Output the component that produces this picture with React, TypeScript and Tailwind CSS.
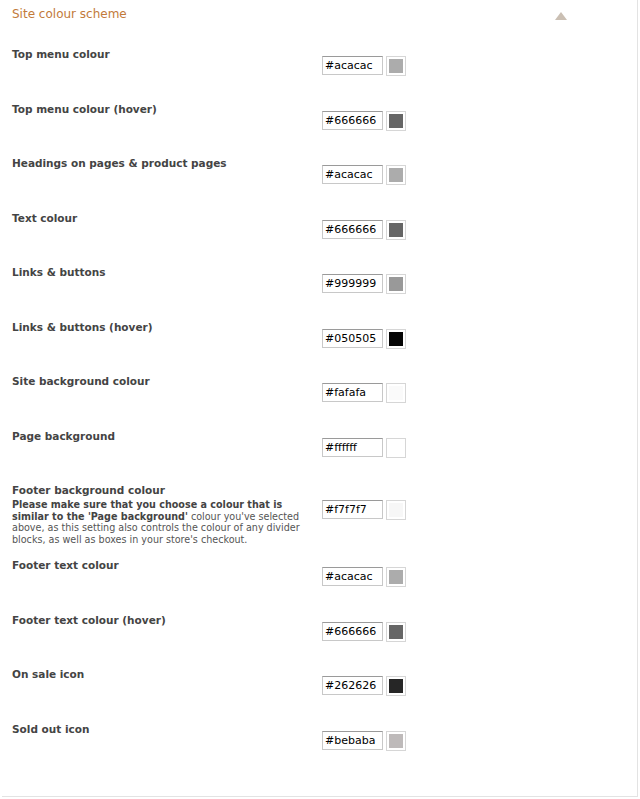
const rows: { label: string; value: string; note?: boolean }[] = [
  { label: "Top menu colour", value: "#acacac" },
  { label: "Top menu colour (hover)", value: "#666666" },
  { label: "Headings on pages & product pages", value: "#acacac" },
  { label: "Text colour", value: "#666666" },
  { label: "Links & buttons", value: "#999999" },
  { label: "Links & buttons (hover)", value: "#050505" },
  { label: "Site background colour", value: "#fafafa" },
  { label: "Page background", value: "#ffffff" },
  { label: "Footer background colour", value: "#f7f7f7", note: true },
  { label: "Footer text colour", value: "#acacac" },
  { label: "Footer text colour (hover)", value: "#666666" },
  { label: "On sale icon", value: "#262626" },
  { label: "Sold out icon", value: "#bebaba" },
];

function ColourRow({ label, value, note }: { label: string; value: string; note?: boolean }) {
  return (
    <div className={note ? "flex h-[75px]" : "flex h-[54.5px]"}>
      <div className="w-[310px] shrink-0">
        <div className="text-[10.5px] font-bold text-[#444] leading-[14px]">{label}</div>
        {note && (
          <p className="mt-[2px] text-[9.6px] leading-[11.5px] text-[#555] whitespace-nowrap">
            <b className="text-[#444]">Please make sure that you choose a colour that is</b>
            <br />
            <b className="text-[#444]">similar to the 'Page background'</b> colour you've selected
            <br />
            above, as this setting also controls the colour of any divider
            <br />
            blocks, as well as boxes in your store's checkout.
          </p>
        )}
      </div>
      <div className={note ? "flex items-start gap-[3px] pt-[17px]" : "flex items-start gap-[3px] pt-[9px]"}>
        <div className="w-[61px] h-[19px] border border-[#c8c8c8] border-t-[#9a9a9a] bg-white px-[2px] text-[11px] leading-[17px] text-black">
          {value}
        </div>
        <div className="w-[20px] h-[20px] border border-[#d6d6d6] p-[2px] bg-white">
          <div className="w-full h-full" style={{ backgroundColor: value }} />
        </div>
      </div>
    </div>
  );
}

export default function App() {
  return (
    <div className="w-[640px] h-[799px] bg-white" style={{ fontFamily: "'DejaVu Sans', Verdana, sans-serif" }}>
      <div className="ml-[2px] w-[636px] h-[797px] border-r border-b border-[#e3e3e3] pl-[10px]">
        <div className="flex items-center justify-between pt-[5px] pr-[70px]">
          <span className="text-[12px] text-[#c27a3a]">Site colour scheme</span>
          <div className="w-0 h-0 mt-[4px] border-l-[6px] border-r-[6px] border-b-[8px] border-l-transparent border-r-transparent border-b-[#cabfb3]" />
        </div>
        <div className="mt-[24px]">
          {rows.map((r) => (
            <ColourRow key={r.label} {...r} />
          ))}
        </div>
      </div>
    </div>
  );
}
